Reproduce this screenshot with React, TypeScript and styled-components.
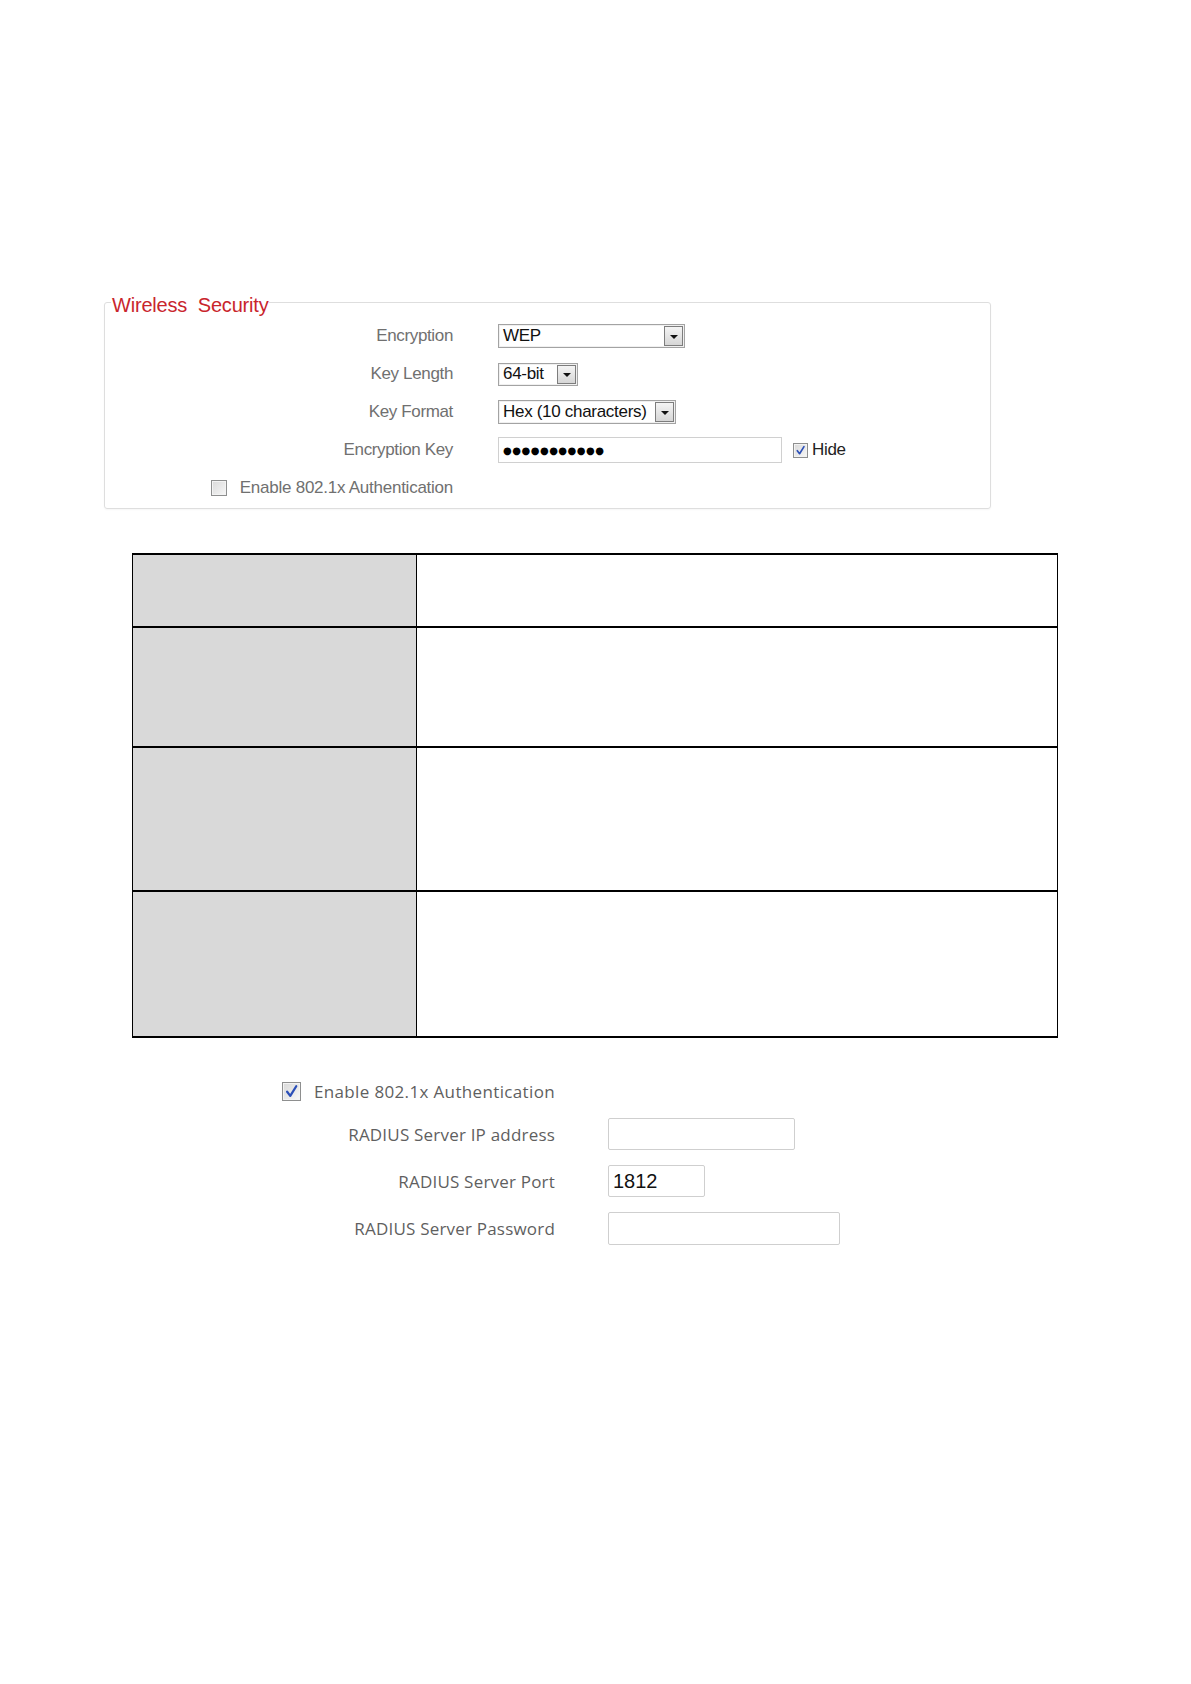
import React from "react";
import styled, { createGlobalStyle } from "styled-components";

const GlobalStyle = createGlobalStyle`
  html, body { margin: 0; padding: 0; background: #ffffff; }
  body { font-family: "Liberation Sans", Arial, sans-serif; }
`;

const Page = styled.div`
  width: 1191px;
  min-height: 1684px;
  display: flex;
  flex-direction: column;
  align-items: flex-start;
`;

const Panel = styled.fieldset`
  box-sizing: border-box;
  margin: 288px 0 0 104px;
  width: 887px;
  padding: 0 0 1px 0;
  border: 1px solid #dedede;
  border-radius: 3px;
  box-shadow: 0 1px 2px rgba(0, 0, 0, 0.04);
`;

const Legend = styled.legend`
  margin-left: 6px;
  padding: 6px 1px 0 1px;
  font-family: "Liberation Sans", Arial, sans-serif;
  font-size: 20px;
  line-height: 23px;
  color: #c9252c;
  white-space: pre;
  letter-spacing: -0.2px;
`;

const FormGrid = styled.div`
  display: grid;
  grid-template-columns: 348px 1fr;
  column-gap: 45px;
  grid-template-rows: 38px 38px 38px 38px 38px;
  align-items: center;
`;

const Label = styled.div`
  text-align: right;
  font-size: 17px;
  color: #707070;
  letter-spacing: -0.35px;
  white-space: nowrap;
`;

const CheckLabel = styled.label`
  display: flex;
  justify-content: flex-end;
  align-items: center;
  gap: 13px;
  font-size: 17px;
  color: #707070;
  letter-spacing: -0.25px;
  white-space: nowrap;
`;

const Control = styled.div`
  display: flex;
  align-items: center;
`;

const SelectBox = styled.div<{ $w: number; $h: number }>`
  box-sizing: border-box;
  display: flex;
  align-items: center;
  width: ${(p) => p.$w}px;
  height: ${(p) => p.$h}px;
  border: 1px solid #a3a3a3;
  background: #ffffff;
  box-shadow: inset 0 0 0 1px #f0f0f0;
`;

const SelectValue = styled.span`
  flex: 1;
  padding-left: 4px;
  font-size: 17px;
  color: #111;
  letter-spacing: -0.3px;
  white-space: nowrap;
`;

const SelectButton = styled.span`
  box-sizing: border-box;
  width: 19px;
  height: calc(100% - 2px);
  margin-right: 1px;
  border: 1px solid #7d7d7d;
  background: linear-gradient(#f4f4f4, #d6d6d6);
  display: flex;
  align-items: center;
  justify-content: center;
`;

const Arrow = styled.span`
  width: 0;
  height: 0;
  border-left: 4px solid transparent;
  border-right: 4px solid transparent;
  border-top: 4px solid #111;
  margin-top: 1px;
`;

const KeyInput = styled.div`
  box-sizing: border-box;
  width: 284px;
  height: 26px;
  border: 1px solid #d0d0d0;
  padding-left: 4px;
  display: flex;
  align-items: center;
  font-family: "DejaVu Sans", sans-serif;
  font-size: 10px;
  letter-spacing: 0.5px;
  color: #000;
`;

const HideLabel = styled.label`
  display: flex;
  align-items: center;
  gap: 4px;
  margin-left: 11px;
  font-size: 17px;
  color: #222;
  letter-spacing: -0.3px;
`;

const Box = styled.span<{ $size: number }>`
  box-sizing: border-box;
  position: relative;
  width: ${(p) => p.$size}px;
  height: ${(p) => p.$size}px;
  border: 1px solid #8e8f8f;
  background: linear-gradient(135deg, #d9d9d9, #f7f7f7);
  box-shadow: inset 0 0 0 1px #f3f3f3;
  display: inline-flex;
  align-items: center;
  justify-content: center;
  flex: none;
`;

const Check = ({ checked, size }: { checked?: boolean; size: number }) => (
  <Box $size={size}>
    {checked && (
      <svg width={size - 4} height={size - 4} viewBox="0 0 12 12">
        <path d="M2.5 6.2 L5 9.5 L9.8 1.8" fill="none" stroke="#2b4fb8" strokeWidth="1.8" strokeLinecap="round" strokeLinejoin="round" />
      </svg>
    )}
  </Box>
);

const Select = ({ value, w, h }: { value: string; w: number; h: number }) => (
  <SelectBox $w={w} $h={h}>
    <SelectValue>{value}</SelectValue>
    <SelectButton>
      <Arrow />
    </SelectButton>
  </SelectBox>
);

const Table = styled.table`
  margin: 44px 0 0 132px;
  width: 926px;
  border-collapse: collapse;
  table-layout: fixed;
`;

const Row = styled.tr<{ $h: number }>`
  height: ${(p) => p.$h}px;
`;

const HeadCell = styled.td`
  width: 283px;
  background: #d9d9d9;
  border: 1px solid #000;
  border-top-width: 2px;
  border-bottom-width: 2px;
  padding: 0;
`;

const BodyCell = styled.td`
  background: #ffffff;
  border: 1px solid #000;
  border-top-width: 2px;
  border-bottom-width: 2px;
  padding: 0;
`;

const RadiusGrid = styled.div`
  margin-top: 41px;
  display: grid;
  grid-template-columns: 555px auto;
  column-gap: 53px;
  grid-template-rows: 24px 32px 32px 33px;
  row-gap: 15px;
  align-items: center;
  font-family: "Open Sans", "Noto Sans", sans-serif;
`;

const RadiusCheck = styled.label`
  display: flex;
  justify-content: flex-end;
  align-items: center;
  gap: 13px;
  font-size: 17px;
  letter-spacing: 0.35px;
  color: #5f5f5f;
  white-space: nowrap;
`;

const RadiusLabel = styled.div`
  text-align: right;
  font-size: 17px;
  letter-spacing: 0.2px;
  color: #5f5f5f;
  white-space: nowrap;
`;

const TextField = styled.div<{ $w: number; $h: number }>`
  box-sizing: border-box;
  width: ${(p) => p.$w}px;
  height: ${(p) => p.$h}px;
  border: 1px solid #cfcfcf;
  border-radius: 2px;
  padding-left: 4px;
  display: flex;
  align-items: center;
  font-family: "Liberation Sans", Arial, sans-serif;
  font-size: 20px;
  color: #111;
`;

const Spacer = styled.div``;

export default function App() {
  return (
    <>
      <GlobalStyle />
      <Page>
        <Panel>
          <Legend>{"Wireless  Security"}</Legend>
          <FormGrid>
            <Label>Encryption</Label>
            <Control>
              <Select value="WEP" w={187} h={24} />
            </Control>
            <Label>Key Length</Label>
            <Control>
              <Select value="64-bit" w={80} h={23} />
            </Control>
            <Label>Key Format</Label>
            <Control>
              <Select value="Hex (10 characters)" w={178} h={24} />
            </Control>
            <Label>Encryption Key</Label>
            <Control>
              <KeyInput>●●●●●●●●●●●</KeyInput>
              <HideLabel>
                <Check checked size={15} />
                Hide
              </HideLabel>
            </Control>
            <CheckLabel>
              <Check size={16} />
              Enable 802.1x Authentication
            </CheckLabel>
            <Spacer />
          </FormGrid>
        </Panel>

        <Table>
          <tbody>
            <Row $h={73}>
              <HeadCell />
              <BodyCell />
            </Row>
            <Row $h={120}>
              <HeadCell />
              <BodyCell />
            </Row>
            <Row $h={144}>
              <HeadCell />
              <BodyCell />
            </Row>
            <Row $h={146}>
              <HeadCell />
              <BodyCell />
            </Row>
          </tbody>
        </Table>

        <RadiusGrid>
          <RadiusCheck>
            <Check checked size={19} />
            Enable 802.1x Authentication
          </RadiusCheck>
          <Spacer />
          <RadiusLabel>RADIUS Server IP address</RadiusLabel>
          <TextField $w={187} $h={32} />
          <RadiusLabel>RADIUS Server Port</RadiusLabel>
          <TextField $w={97} $h={32}>1812</TextField>
          <RadiusLabel>RADIUS Server Password</RadiusLabel>
          <TextField $w={232} $h={33} />
        </RadiusGrid>
      </Page>
    </>
  );
}
